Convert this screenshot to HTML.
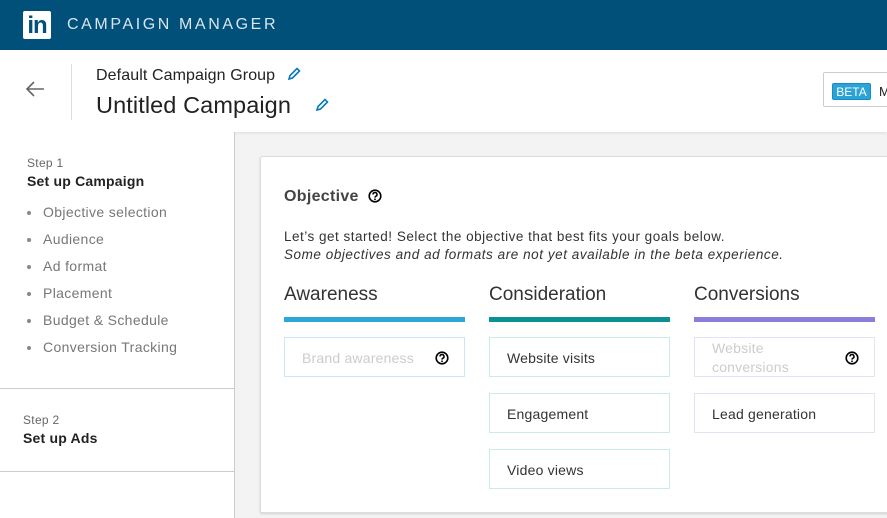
<!DOCTYPE html>
<html><head><meta charset="utf-8">
<style>
*{margin:0;padding:0;box-sizing:border-box}
body{width:887px;height:518px;overflow:hidden;background:#f3f3f3;font-family:"Liberation Sans",Arial,sans-serif;position:relative;color:#333}
.a{position:absolute}
.hdr{left:0;top:0;width:887px;height:50px;background:#00507a}
.logo{left:23px;top:11px;width:28px;height:28px;background:#fff;border-radius:2px;color:#00507a;font-weight:bold;font-size:24px;line-height:30px;text-align:center;letter-spacing:-1px}
.sub{left:0;top:50px;width:887px;height:82px;background:#fff;box-shadow:0 1px 3px rgba(0,0,0,.1)}
.side{left:0;top:132px;width:235px;height:386px;background:#fff;border-right:1px solid #ccc}
.li{left:27px;font-size:14px;color:#777;letter-spacing:.35px}
.li:before{content:"";position:absolute;left:0;top:7px;width:4px;height:4px;border-radius:50%;background:#888}
.li span{margin-left:16px}
.card{left:260px;top:156px;width:640px;height:357px;background:#fff;border:1px solid #ddd;box-shadow:0 1px 2px rgba(0,0,0,.15);border-radius:2px}
.col{font-size:19px;color:#333;top:284px}
.bar{top:317px;width:181px;height:5px}
.box{width:181px;height:40px;background:#fff;font-size:14px;color:#333;padding-left:17px;line-height:40px;letter-spacing:.2px}
.q{position:absolute;right:15px;top:13px;width:14px;height:14px}
</style></head><body>
<div class="a hdr"></div>
<div class="a logo">in</div>
<div class="a" style="left:67px;top:16px;color:#d7e6ef;font-size:16px;letter-spacing:2.6px">CAMPAIGN MANAGER</div>
<div class="a sub"></div>
<svg class="a" style="left:24px;top:79px" width="22" height="20" viewBox="0 0 22 20"><path d="M20 10H3M10 3 3 10l7 7" fill="none" stroke="#666" stroke-width="1.6"/></svg>
<div class="a" style="left:71px;top:64px;width:1px;height:56px;background:#ddd"></div>
<div class="a" style="left:96px;top:67px;font-size:16px;color:#222;letter-spacing:.1px">Default Campaign Group</div>
<svg class="a" style="left:287px;top:67px" width="14" height="14" viewBox="0 0 14 14"><path d="M2 12l1-3.5 7-7 2.5 2.5-7 7z" fill="none" stroke="#0a79b3" stroke-width="1.6"/></svg>
<div class="a" style="left:96px;top:92px;font-size:23.5px;color:#222;letter-spacing:.1px">Untitled Campaign</div>
<svg class="a" style="left:315px;top:98px" width="14" height="14" viewBox="0 0 14 14"><path d="M2 12l1-3.5 7-7 2.5 2.5-7 7z" fill="none" stroke="#0a79b3" stroke-width="1.6"/></svg>
<div class="a" style="left:823px;top:72px;width:80px;height:35px;border:1px solid #ccc;border-radius:2px;background:#fff"></div>
<div class="a" style="left:832px;top:83px;width:39px;height:17px;background:#2aa3d6;border:1px solid #1a8cc0;border-radius:2px;color:#fff;font-size:12px;line-height:16px;text-align:center">BETA</div>
<div class="a" style="left:879px;top:84px;font-size:13px;color:#222">M</div>
<div class="a side"></div>
<div class="a" style="left:27px;top:156px;font-size:12px;color:#666;letter-spacing:.3px">Step 1</div>
<div class="a" style="left:27px;top:173px;font-size:14px;font-weight:bold;color:#222;letter-spacing:.2px">Set up Campaign</div>
<div class="a li" style="top:204px"><span>Objective selection</span></div>
<div class="a li" style="top:231px"><span>Audience</span></div>
<div class="a li" style="top:258px"><span>Ad format</span></div>
<div class="a li" style="top:285px"><span>Placement</span></div>
<div class="a li" style="top:312px"><span>Budget &amp; Schedule</span></div>
<div class="a li" style="top:339px"><span>Conversion Tracking</span></div>
<div class="a" style="left:0;top:388px;width:235px;height:1px;background:#ccc"></div>
<div class="a" style="left:23px;top:413px;font-size:12px;color:#666;letter-spacing:.3px">Step 2</div>
<div class="a" style="left:23px;top:430px;font-size:14px;font-weight:bold;color:#222;letter-spacing:.2px">Set up Ads</div>
<div class="a" style="left:0;top:471px;width:235px;height:1px;background:#ccc"></div>
<div class="a card"></div>
<div class="a" style="left:284px;top:188px;font-size:16px;font-weight:bold;color:#444;letter-spacing:.3px">Objective</div>
<svg class="a" style="left:368px;top:189px" width="14" height="14" viewBox="0 0 14 14"><circle cx="7" cy="7" r="5.8" fill="none" stroke="#000" stroke-width="1.6"/><path d="M5 5.5a2 2 0 1 1 2.8 1.8c-.6.3-.8.6-.8 1.3" fill="none" stroke="#000" stroke-width="1.5"/><circle cx="7" cy="10.3" r=".9"/></svg>
<div class="a" style="left:284px;top:229px;font-size:13.5px;color:#333;letter-spacing:.5px">Let’s get started! Select the objective that best fits your goals below.</div>
<div class="a" style="left:284px;top:247px;font-size:13.5px;color:#333;font-style:italic;letter-spacing:.55px">Some objectives and ad formats are not yet available in the beta experience.</div>
<div class="a col" style="left:284px">Awareness</div>
<div class="a col" style="left:489px">Consideration</div>
<div class="a col" style="left:694px">Conversions</div>
<div class="a bar" style="left:284px;background:#2ba8d4"></div>
<div class="a bar" style="left:489px;background:#0b9195"></div>
<div class="a bar" style="left:694px;background:#8a7fd8"></div>
<div class="a box" style="left:284px;top:337px;border:1px solid #cbe7f3;color:#ccc">Brand awareness<svg class="q" viewBox="0 0 14 14"><circle cx="7" cy="7" r="5.8" fill="none" stroke="#000" stroke-width="1.6"/><path d="M5 5.5a2 2 0 1 1 2.8 1.8c-.6.3-.8.6-.8 1.3" fill="none" stroke="#000" stroke-width="1.5"/><circle cx="7" cy="10.3" r=".9"/></svg></div>
<div class="a box" style="left:489px;top:337px;border:1px solid #c9ecea">Website visits</div>
<div class="a box" style="left:489px;top:393px;border:1px solid #c9ecea">Engagement</div>
<div class="a box" style="left:489px;top:449px;border:1px solid #c9ecea">Video views</div>
<div class="a box" style="left:694px;top:337px;border:1px solid #e3e2f3;color:#ccc;line-height:19px;padding-top:1px">Website<br>conversions<svg class="q" viewBox="0 0 14 14"><circle cx="7" cy="7" r="5.8" fill="none" stroke="#000" stroke-width="1.6"/><path d="M5 5.5a2 2 0 1 1 2.8 1.8c-.6.3-.8.6-.8 1.3" fill="none" stroke="#000" stroke-width="1.5"/><circle cx="7" cy="10.3" r=".9"/></svg></div>
<div class="a box" style="left:694px;top:393px;border:1px solid #e3e2f3">Lead generation</div>
</body></html>
